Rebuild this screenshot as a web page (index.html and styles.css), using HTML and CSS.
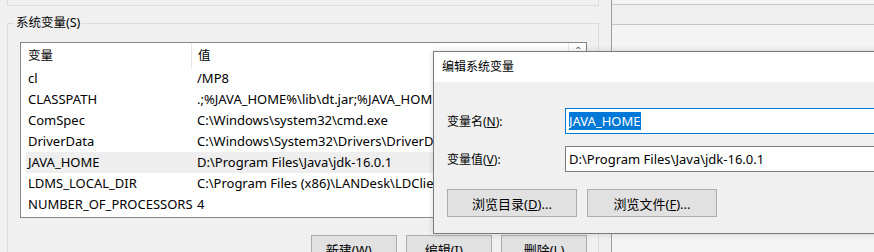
FILE: index.html
```html
<!DOCTYPE html>
<html lang="zh-CN">
<head>
    <meta charset="UTF-8">
    <title>编辑系统变量</title>
    <link rel="stylesheet" href="styles.css">
</head>
<body>
    <div class="screen">
        <div class="main">
            <div class="top-group"></div>

            <div class="group">
                <span class="group-title">系统变量(S)</span>

                <div class="list">
                    <div class="list-body">
                        <div class="row head">
                            <div class="col-name">变量</div>
                            <div class="col-value">值</div>
                        </div>
                        <div class="row"><div class="col-name">cl</div><div class="col-value">/MP8</div></div>
                        <div class="row"><div class="col-name">CLASSPATH</div><div class="col-value">.;%JAVA_HOME%\lib\dt.jar;%JAVA_HOME%\lib\tools.jar;</div></div>
                        <div class="row"><div class="col-name">ComSpec</div><div class="col-value">C:\Windows\system32\cmd.exe</div></div>
                        <div class="row"><div class="col-name">DriverData</div><div class="col-value">C:\Windows\System32\Drivers\DriverData</div></div>
                        <div class="row selected"><div class="col-name">JAVA_HOME</div><div class="col-value">D:\Program Files\Java\jdk-16.0.1</div></div>
                        <div class="row"><div class="col-name">LDMS_LOCAL_DIR</div><div class="col-value">C:\Program Files (x86)\LANDesk\LDClient\Data</div></div>
                        <div class="row"><div class="col-name">NUMBER_OF_PROCESSORS</div><div class="col-value">4</div></div>
                    </div>
                    <div class="scrollbar"><span class="arrow">&#8963;</span></div>
                </div>

                <div class="list-buttons">
                    <button class="btn">新建(W)...</button>
                    <button class="btn">编辑(I)...</button>
                    <button class="btn">删除(L)</button>
                </div>
            </div>
        </div>

        <div class="side">
            <div class="side-strip"></div>
        </div>

        <div class="dialog">
            <div class="dialog-title">编辑系统变量</div>
            <div class="dialog-body">
                <div class="field">
                    <label class="field-label">变量名(<u>N</u>):</label>
                    <div class="input focused"><span class="sel">JAVA_HOME</span></div>
                </div>
                <div class="field">
                    <label class="field-label">变量值(<u>V</u>):</label>
                    <div class="input">D:\Program Files\Java\jdk-16.0.1</div>
                </div>
                <div class="dialog-buttons">
                    <button class="btn wide">浏览目录(<u>D</u>)...</button>
                    <button class="btn wide">浏览文件(<u>F</u>)...</button>
                </div>
            </div>
        </div>
    </div>
</body>
</html>
```

FILE: styles.css
```css
body {
    margin: 0;
    background-color: #f0f0f0;
    font-family: "Noto Sans", "Noto Sans CJK SC", sans-serif;
    font-size: 13px;
    color: #000;
}

.screen {
    position: relative;
    display: flex;
    width: 874px;
    height: 252px;
    overflow: hidden;
}

.main {
    width: 611px;
    flex-shrink: 0;
    border-right: 1px solid #a0a0a0;
}

.top-group {
    height: 5px;
    margin: 0 12px 0 7px;
    border: 1px solid #dcdcdc;
    border-top: none;
}

.group {
    position: relative;
    margin: 17px 12px 0 7px;
    padding: 18px 11px 0 12px;
    border: 1px solid #dcdcdc;
    border-bottom: none;
    height: 240px;
}

.group-title {
    position: absolute;
    top: -9px;
    left: 6px;
    padding: 0 2px;
    line-height: 16px;
    font-size: 12.5px;
    background-color: #f0f0f0;
}

/* list view */
.list {
    display: flex;
    height: 174px;
    background-color: #fff;
    border: 1px solid #828790;
}

.list-body {
    flex: 1;
    overflow: hidden;
}

.row {
    display: flex;
    height: 21px;
    line-height: 21px;
    white-space: nowrap;
    margin-left: 5px;
}

.row.head {
    height: 25px;
    line-height: 25px;
    margin-left: 0;
    padding-left: 5px;
    font-size: 12.5px;
}

.row.selected {
    background-color: #eeeeee;
}

.col-name {
    width: 163px;
    padding-left: 2px;
    flex-shrink: 0;
}

.head .col-name {
    border-right: 1px solid #e5e5e5;
}

.col-value {
    padding-left: 6px;
}

.scrollbar {
    width: 17px;
    border-left: 1px solid #e8e8e8;
    background-color: #fff;
    text-align: center;
    font-size: 10px;
    line-height: 14px;
    color: #606060;
}

.list-buttons {
    display: flex;
    justify-content: flex-end;
    gap: 9px;
    margin-top: 17px;
}

.btn {
    font-family: inherit;
    font-size: 13px;
    height: 28px;
    width: 86px;
    padding: 0;
    background-color: #e1e1e1;
    border: 1px solid #adadad;
    color: #000;
}

/* right pane */
.side {
    flex: 1;
    background-color: #f4f4f4;
}

.side-strip {
    height: 19px;
    margin-top: 4px;
    background-color: #efefef;
    border-top: 1px solid #c8c8c8;
    border-bottom: 1px solid #c8c8c8;
}

/* edit dialog */
.dialog {
    position: absolute;
    left: 433px;
    top: 51px;
    width: 460px;
    height: 181px;
    background-color: #f0f0f0;
    border: 1px solid #7a7a7a;
    box-shadow: 0 0 6px rgba(0, 0, 0, 0.15);
}

.dialog-title {
    height: 30px;
    line-height: 30px;
    padding-left: 8px;
    background-color: #fff;
    font-size: 12px;
}

.dialog-body {
    padding: 26px 0 0 13px;
}

.field {
    display: flex;
    align-items: center;
    margin-bottom: 12px;
}

.field-label {
    width: 118px;
    font-size: 12px;
}

.input {
    flex: 1;
    height: 24px;
    line-height: 24px;
    padding-left: 3px;
    background-color: #fff;
    border: 1px solid #7a7a7a;
    white-space: nowrap;
}

.input.focused {
    border-color: #0078d7;
}

.sel {
    background-color: #0078d7;
    color: #fff;
}

.dialog-buttons {
    display: flex;
    gap: 10px;
    margin-top: 17px;
}

.btn.wide {
    width: 130px;
}
```
